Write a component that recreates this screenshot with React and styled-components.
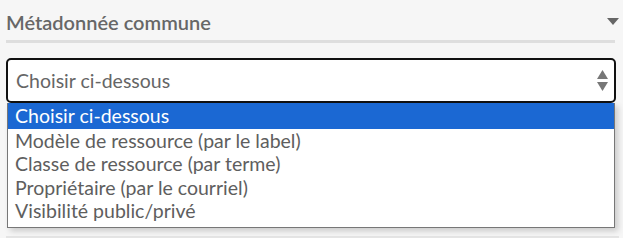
import React from "react"
import styled, {createGlobalStyle} from "styled-components"

const GlobalStyle = createGlobalStyle`
    html, body {
        margin: 0;
        padding: 0;
        background: #f6f6f6;
        font-family: Lato, "Liberation Sans", sans-serif;
    }
`

const Page = styled.div`
    width: 623px;
    height: 238px;
    padding: 0 8px 0 6px;
    box-sizing: border-box;
    overflow: hidden;
`

const Section = styled.div`
    display: flex;
    flex-direction: column;
`

const Legend = styled.div`
    display: flex;
    align-items: center;
    justify-content: space-between;
    height: 43px;
    padding-top: 3px;
    box-sizing: border-box;
    border-bottom: 3px solid #dedede;
    color: #676767;
    font-size: 20px;
    font-weight: 600;
`

const Caret = styled.span`
    width: 0;
    height: 0;
    margin-right: -4px;
    margin-top: -1px;
    border-left: 6px solid transparent;
    border-right: 6px solid transparent;
    border-top: 7px solid #666;
`

const Field = styled.div`
    position: relative;
    margin-top: 15px;
`

const SelectBox = styled.div`
    display: flex;
    align-items: center;
    justify-content: space-between;
    height: 45px;
    box-sizing: border-box;
    padding: 0 6px 0 8px;
    margin-right: -1px;
    background: #fff;
    border: 2px solid #111;
    border-radius: 5px;
    color: #666;
    font-size: 19.5px;
`

const Spinner = styled.svg`
    display: block;
`

const List = styled.div`
    position: absolute;
    left: 1px;
    right: 0;
    top: 45px;
    background: #fff;
    border: 1px solid #777;
    border-top: none;
    box-shadow: 3px 3px 6px rgba(0, 0, 0, 0.18);
    padding-bottom: 5px;
`

const Option = styled.div`
    height: ${p => (p.$first ? "26px" : "23.3px")};
    line-height: ${p => (p.$first ? "26px" : "23.3px")};
    padding-left: 7px;
    font-size: 19.5px;
    color: ${p => (p.$active ? "#fff" : "#5e5e5e")};
    background: ${p => (p.$active ? "#1b68d3" : "transparent")};
`

const NextSection = styled.div`
    margin-top: 133px;
    margin-right: -4px;
    border-top: 2px solid #e4e4e4;
`

const options = [
    "Choisir ci-dessous",
    "Modèle de ressource (par le label)",
    "Classe de ressource (par terme)",
    "Propriétaire (par le courriel)",
    "Visibilité public/privé",
]

const App = () => {
    return (
        <Page>
            <GlobalStyle/>
            <Section>
                <Legend>
                    <span>Métadonnée commune</span>
                    <Caret/>
                </Legend>
                <Field>
                    <SelectBox>
                        <span>Choisir ci-dessous</span>
                        <Spinner width="11" height="22" viewBox="0 0 11 22">
                            <path d="M5.5 0 L11 9 L0 9 Z" fill="#777"/>
                            <path d="M0 12 L11 12 L5.5 21 Z" fill="#777"/>
                        </Spinner>
                    </SelectBox>
                    <List>
                        {options.map((label, i) => (
                            <Option key={label} $active={i === 0} $first={i === 0}>
                                {label}
                            </Option>
                        ))}
                    </List>
                </Field>
                <NextSection/>
            </Section>
        </Page>
    )
}

export default App
